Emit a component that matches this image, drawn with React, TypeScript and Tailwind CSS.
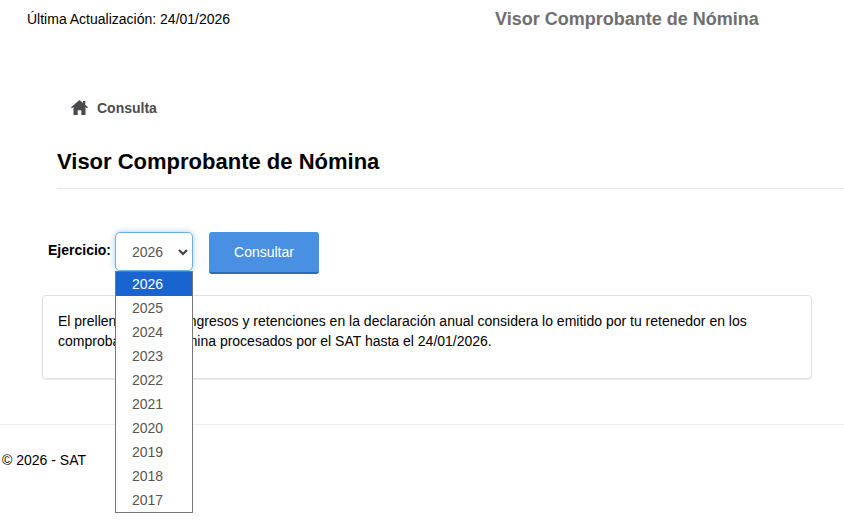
import React from 'react';

const years = ['2026', '2025', '2024', '2023', '2022', '2021', '2020', '2019', '2018', '2017'];

const HomeIcon = () => (
  <svg viewBox="0 0 17 15" className="w-[17px] h-[15px] -mt-[2px]" fill="currentColor">
    <path d="M8.5 0L12 2.9V1h2.2v3.7L17 7.2l-.9 1-1.6-1.3V15H10.3V10.2H6.7V15H2.5V6.9L.9 8.2 0 7.2z" />
  </svg>
);

const App = () => {
  return (
    <div className="w-[844px] h-[526px] overflow-hidden bg-white text-[14px] leading-5 text-black font-['Liberation_Sans',Arial,sans-serif]">
      <header className="flex items-center h-[20px] mt-[9px] pl-[27px]">
        <p className="w-[468px]">Última Actualización: 24/01/2026</p>
        <h2 className="text-[18px] font-bold text-[#6f6f6f]">Visor Comprobante de Nómina</h2>
      </header>

      <nav className="flex items-center gap-[9px] h-[20px] mt-[69px] ml-[71px] font-bold text-[#4b4b4f]">
        <HomeIcon />
        <span>Consulta</span>
      </nav>

      <h1 className="mt-[31px] ml-[57px] h-[40px] border-b border-[#e2e2e2] text-[22px] leading-[25px] font-bold">
        Visor Comprobante de Nómina
      </h1>

      <div className="flex items-start mt-[43px] ml-[48px]">
        <label className="w-[67px] pt-[8px] font-bold">Ejercicio:</label>
        <div className="relative w-[78px] h-[39px]">
          <div className="flex items-center justify-between h-full pl-[16px] pr-[3px] rounded-[5px] border border-[#66afe9] bg-white text-[#555] shadow-[0_0_6px_rgba(102,175,233,0.6)]">
            <span className="pt-[1px]">2026</span>
            <svg viewBox="0 0 12 12" className="w-[12px] h-[12px]" fill="none" stroke="#444" strokeWidth="2.2">
              <path d="M2 4l4 4 4-4" />
            </svg>
          </div>
          <ul className="absolute z-10 left-0 top-[39px] w-[78px] border border-[#767676] bg-white text-[#555]">
            {years.map((year, i) => (
              <li
                key={year}
                className={i === 0 ? 'h-[24px] pl-[16px] leading-[24px] bg-[#1a64d0] text-white' : 'h-[24px] pl-[16px] leading-[24px]'}
              >
                {year}
              </li>
            ))}
          </ul>
        </div>
        <button className="ml-[16px] w-[110px] h-[42px] rounded-[3px] border-b-2 border-[#2d6cb5] bg-[#4a90e2] text-white">
          Consultar
        </button>
      </div>

      <section className="mt-[21px] ml-[42px] w-[770px] h-[84px] pt-[15px] px-[15px] rounded-[4px] border border-[#e0e0e0] shadow-[0_1px_1px_rgba(0,0,0,0.08)]">
        <p className="w-[740px]">
          El prellenado de tus ingresos y retenciones en la declaración anual considera lo emitido por tu retenedor en los
          comprobantes de nómina procesados por el SAT hasta el 24/01/2026.
        </p>
      </section>

      <footer className="mt-[45px] border-t border-[#eeeeee] pt-[25px] pl-[2px]">
        <p>© 2026 - SAT</p>
      </footer>
    </div>
  );
};

export default App;
